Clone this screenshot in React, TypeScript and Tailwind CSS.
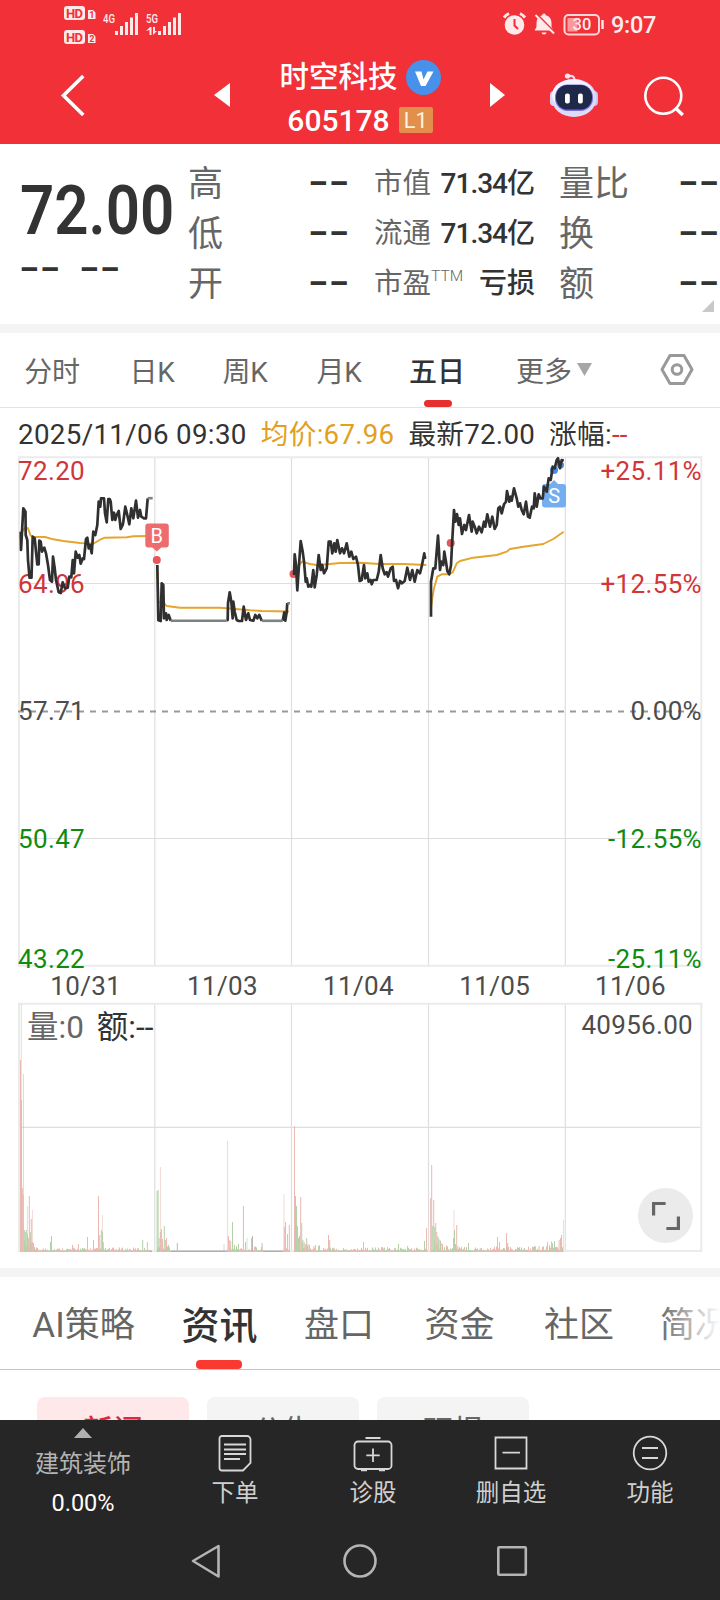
import type { ReactNode } from 'react';

type Bar = [x: number, height: number, tone: 'up' | 'down' | 'flat'];

const priceLines = [
    '20.7,531.7 21,550 22,532 23.3,508.3 25.5,511.7 25.7,535 27.3,540 28,560 29.5,577.7 31.5,577.7 32.7,536.7 34.7,538.3 36,551.7 37.3,564.3 38.7,564.3 39.3,540.7 40.7,541.7 42,551.7 44.3,547.7 46,553.3 48,565 50,580 52,581.7 53,556.7 54.7,568.3 56,580 58.7,592.3 60.7,593 62.7,582.3 65,588.3 67.7,587.7 69.3,576.7 71.3,577.3 72.7,560 74,573.3 75.7,551.7 77.7,557.7 79.3,555 80.7,563.7 82.7,558.3 84,559 86,539 87.3,537.7 88.7,548.3 90,545 91.7,553.3 93.3,531.7 95.3,535 97.3,525 98.7,501.7 100.3,506.7 101,498.3 104,498.3 105,513.3 106.7,522.3 108.3,499 109.7,499 110.7,501.7 112.3,520 114,512.7 115.3,520 116.7,515 118.7,511 120.7,529 122.7,525 123.3,521.7 125.3,506.7 127.3,515 129.3,524.3 131.3,508.3 133.3,518.3 136,500.7 138,517.7 140,510 141.3,516.7 144,518.3 146,518.3 147.7,498.3',
    '157.3,565 158.3,620.3 160.7,621 161.7,583.3 163.3,585 164,618.3 166,613.3 166.7,620 168.7,615 170.7,620.7',
    '226.7,620.7 227.7,620 228,603.3 229.7,592.3 231.3,601.7 232,610 232.7,618.3 233.3,601.7 234.7,611.7 236.7,620 238.7,621 242,621 243.7,606.7 246,620 248.3,613.3 250,620 253.3,620.7 255.3,615 257.3,618.3 259.3,615 261.7,620.7',
    '282.7,620.7 284.3,612.3 285.3,620.7 286.7,611.7 287.3,603',
    '294,575 294.7,554.3 296,565 297.3,590.3 299,565 300.7,541 302.7,551.7 304,561.7 305.7,581.7 306.7,578.3 308.3,586.7 310,585 311.3,586.7 313.3,570 314.7,587.3 316.7,575 318.7,555 320.7,570 322.3,565 324,573.3 326.7,568.3 328.7,541.7 330.7,541.7 332.3,553.3 334.3,543.3 335.7,551.7 337.3,540 340,553.3 342,548.3 344,553.3 346.7,543.3 349.3,556.7 351.3,551.7 353.3,559 356,556.7 358,565 359.7,581 361.7,580 364,565 365.3,578.3 367.3,573.3 368.7,581.7 370.7,580 371.7,584.3 373.3,580 376.7,580 378.7,571.7 380.7,555 382.7,568.3 384.7,574.3 386.7,572.3 388,576.7 390.7,568.3 392.7,566.7 394,581 396,580 398,588.3 400,581 402,583.3 404.7,581 407.3,567.7 410,580 412.3,570 414.7,581.7 417.3,570 420,573.3 422,565 424.3,553.3 424.7,557.7 426.3,557.7',
    '431,616.7 431,581.7 433.3,568.3 435.3,568.3 438,535.7 439,551.7 440,570 441.3,561.7 443.3,565 444.3,551.7 446,561.7 447.3,571 449.3,574.3 451,565 452,545 454,510 455.3,521.7 457,514 458.7,525 460,518.3 462,534 464.3,525 466,530 469,515 471.7,531.7 472.7,521.7 474.7,526.7 476.7,533.3 479,526.7 481.7,532.3 484,521.7 485.3,526.7 487.3,514.3 490,526.7 492.3,516.7 494.7,529 496.7,525 498.3,508.3 500,506.7 501.7,513.3 504,504.3 506,501.7 507,491 509.3,501.7 510.7,496.7 511.7,500.7 514,488.3 516.7,498.3 518.3,506.7 520,503.3 521.7,510 523.7,514.3 526,501.7 528,516.7 529.7,517.7 532,506.7 533.7,508.3 534.7,493.3 536.7,506.7 538.7,494.3 540.3,498.3 542.7,498.3 544,486.7 546.7,491.7 548.7,478.3 550.7,480 552.7,466.7 554.7,468.3 556.7,460 558,458.3 560,468.3 561.7,460 563.7,460.7',
];

const flatLines = ['147.7,498.2 152.7,498.2', '170.7,620.8 226.7,620.8', '261.7,620.8 282.7,620.8', '287.3,603.3 290,603.3'];

const avgLines = [
    '20.7,531.7 22,531.7 25.3,527.7 28,528.3 30.7,535.7 33.3,536.7 45,537 53.3,539.3 63.3,541 80,543 93.3,543.7 100,539.7 105,537.7 126.7,537.3 133.3,536.3 151.7,536',
    '157.3,565 158.7,601.7 160.7,603.3 163.3,602 166.7,606 180,607.7 220,607.7 226.7,608.3 238.3,609.3 250,610.3 262,611 289,611.5',
    '293.3,565 298.3,566.7 301.7,561.7 310,564 316.7,565 330,564 340,563 360,562.7 380,564 403.3,564 426.3,565',
    '431,608.3 432.3,598.3 434,588.3 437.3,576.7 441.7,574.3 448.3,574.3 452.7,572.3 456.7,563.3 460,561 473.3,557.7 496.7,555 506.7,551.7 510,549 523.3,546.7 543.3,544 553.3,539 563.7,531.7',
];

const spikes: Bar[] = [
    [20.4, 192, 'up'], [21.4, 152, 'up'], [22.3, 64, 'up'], [23.2, 57, 'up'], [24.2, 22, 'down'], [25.2, 20, 'down'], [26.2, 22, 'down'], [27.2, 18, 'down'], [28.2, 14, 'up'], [29.2, 56, 'up'], [30.2, 20, 'down'], [31.2, 33, 'up'], [32.4, 10, 'up'], [33.4, 9, 'up'], [34.4, 5, 'down'],
    [50.4, 10, 'down'], [51.4, 16, 'down'], [72.4, 7, 'up'], [78.4, 8, 'up'], [87.4, 15, 'up'], [93.4, 12, 'up'], [98.4, 56, 'up'], [99.6, 17, 'up'], [101.2, 22, 'down'], [102.4, 20, 'down'], [103.2, 10, 'up'], [142.6, 12, 'down'], [147.2, 10, 'up'],
    [157, 61, 'down'], [158, 62, 'down'], [159, 14, 'down'], [160.3, 20, 'up'], [161.3, 23, 'up'], [162.3, 13, 'up'], [164.2, 26, 'down'], [165.2, 12, 'down'], [166.4, 14, 'up'], [168.4, 7, 'down'], [177.2, 9, 'flat'],
    [228.4, 16, 'up'], [229.6, 12, 'up'], [230.6, 11, 'up'], [232.4, 30, 'down'], [234.4, 7, 'down'], [236.4, 6, 'down'], [238.4, 8, 'down'], [243.3, 46, 'up'], [245.4, 10, 'down'], [251.6, 14, 'flat'], [252.4, 16, 'flat'], [262, 9, 'down'],
    [284.2, 25, 'up'], [285.4, 30, 'up'], [287.4, 18, 'up'], [289.2, 27, 'up'],
    [294.4, 126, 'up'], [295.4, 56, 'down'], [296.4, 46, 'down'], [297.4, 26, 'up'], [298.4, 14, 'down'], [299.4, 16, 'down'], [300.6, 55, 'up'], [301.6, 29, 'down'], [302.8, 12, 'down'], [304, 10, 'up'], [305.2, 8, 'up'], [306.6, 14, 'down'], [308, 8, 'up'], [309.4, 7, 'down'], [313.8, 6, 'up'],
    [328.4, 17, 'up'], [329.6, 12, 'down'], [363.4, 10, 'up'], [398.4, 8, 'down'], [407.4, 6, 'up'], [424.4, 11, 'down'], [426.4, 24, 'up'],
    [430.6, 54, 'up'], [431.6, 87, 'up'], [432.6, 26, 'down'], [433.6, 52, 'up'], [434.6, 25, 'down'], [435.6, 29, 'up'], [436.6, 20, 'up'], [437.6, 16, 'up'], [438.6, 14, 'down'], [439.8, 12, 'up'], [441, 9, 'down'], [442.4, 7, 'up'], [444.4, 5, 'down'],
    [453.4, 14, 'up'], [454.4, 22, 'down'], [455.4, 8, 'down'], [456.6, 27, 'up'], [457.8, 6, 'up'], [468.4, 9, 'down'], [497.4, 15, 'up'], [499.4, 10, 'up'], [506.4, 19, 'up'], [507.6, 9, 'down'], [534.4, 6, 'down'], [539, 6, 'up'], [547.4, 10, 'up'], [554.4, 11, 'down'], [559, 12, 'up'], [560.4, 14, 'up'], [561.4, 17, 'up'],
];

const faintSpikes: Bar[] = [
    [21.3, 248, 'down'], [23.4, 178, 'flat'], [27.4, 46, 'down'], [32.4, 42, 'up'], [102.4, 37, 'up'],
    [160.4, 85, 'up'], [224, 8, 'flat'], [227.4, 111, 'up'], [284, 58, 'up'], [454, 42, 'up'], [563.4, 32, 'up'], [247, 14, 'down'],
];

const toneFill = { up: '#e9b9b2', down: '#b4d1a8', flat: '#b9b9b9' };

// low volume between the spikes: [from, to, base height]
const quiet = [
    [24, 34, 14],
    [34, 150, 3],
    [157, 171, 7],
    [227, 263, 4],
    [283, 290, 7],
    [295, 310, 10],
    [310, 325, 6],
    [325, 428, 3.5],
    [431, 441, 16],
    [441, 450, 7],
    [450, 545, 4],
    [545, 563, 9],
];

const quietBars: Bar[] = quiet.flatMap(([from, to, base]) => {
    const out: Bar[] = [];
    for (let x = from; x < to; x += 1) {
        const n = Math.abs(Math.sin(x * 12.9898) * 43758.5453) % 1;
        out.push([x, 1.6 + n * n * base, n * 7 % 1 > 0.42 ? 'up' : 'down']);
    }
    return out;
});

const gridX = [154.8, 291.5, 428.5, 565.3];

function Dashes() {
    return (
        <span className="flex h-[28px] w-[42px] items-center">
            <span className="origin-left -translate-x-px -translate-y-[1.5px] scale-x-[1.85] whitespace-pre font-['DejaVu_Sans'] text-[27px] font-bold leading-none text-[#333]">--</span>
        </span>
    );
}

function StatusBar() {
    return (
        <div className="flex h-[46px] items-center pl-[63px] text-white">
            <svg width="122" height="46" viewBox="63 0 122 46" fill="#ffe9ea">
                <rect x="64" y="6" width="21" height="14" rx="3" />
                <rect x="64" y="30" width="21" height="14" rx="3" />
                <g fill="#f13038" fontFamily="Roboto" fontWeight="700">
                    <text x="66" y="17.8" fontSize="13" textLength="17">HD</text>
                    <text x="66" y="41.8" fontSize="13" textLength="17">HD</text>
                </g>
                <path d="M88 10h5l2.500 2.500V19H88zM88 34h5l2.500 2.500V43H88z" />
                <g fill="#f13038" fontFamily="Roboto" fontWeight="700" fontSize="9">
                    <text x="89.300" y="18">1</text>
                    <text x="89.300" y="42">2</text>
                </g>
                <g fontFamily="Roboto" fontWeight="500" fontSize="13">
                    <text x="103" y="23" textLength="12" lengthAdjust="spacingAndGlyphs">4G</text>
                    <text x="146" y="23" textLength="12" lengthAdjust="spacingAndGlyphs">5G</text>
                </g>
                <path d="M115 31h3v4h-3zM120 26h3v9h-3zM125 22h3v13h-3zM130 17.500h3V35h-3zM135 13h3v22h-3z" />
                <path d="M158 31h3v4h-3zM163 26h3v9h-3zM168 22h3v13h-3zM173 17.500h3V35h-3zM178 13h3v22h-3z" />
                <path d="M146 31l4-4h1.500v8h-2v-5zM153 27h2v4h2l-4 4z" />
            </svg>
            <svg className="ml-[318px]" width="101" height="46" viewBox="503 0 101 46" fill="#ffe9ea">
                <circle cx="514.500" cy="25" r="9.800" />
                <path d="M504 17.500a14 14 0 0 1 5-4M525 17.500a14 14 0 0 0-5-4" fill="none" stroke="#ffe9ea" strokeWidth="3" />
                <path d="M514.500 19v6.500l3.500 3.500" fill="none" stroke="#f13038" strokeWidth="2" />
                <path d="M544 13.500a1.800 1.800 0 0 1 1.800 1.800c3.800 1 5.700 3.700 5.700 7.700v4l2 3.500H534.500l2-3.500v-4c0-4 2-6.700 5.700-7.700a1.800 1.800 0 0 1 1.800-1.800zM541.500 32.500h5a2.500 2 0 0 1-5 0z" />
                <path d="M537 14.500l18 18.500" stroke="#f13038" strokeWidth="2.400" />
                <path d="M535.500 15l18.500 18.500" stroke="#ffe9ea" strokeWidth="2" />
                <rect x="564.500" y="15" width="34.500" height="19.500" rx="4" fill="none" stroke="#ffd7d9" strokeWidth="2" />
                <rect x="567.500" y="18" width="10" height="13.500" fill="#fb9a9d" />
                <text x="572.500" y="30.300" fontFamily="Roboto" fontWeight="500" fontSize="16.500" textLength="19">30</text>
                <path d="M602.500 20v9" stroke="#ffe9ea" strokeWidth="2.500" />
            </svg>
            <span className="mt-[6px] ml-[7px] text-[23.500px] leading-none font-medium tracking-[-0.3px] text-[#ffeeee]">9:07</span>
        </div>
    );
}

function Header() {
    return (
        <div className="flex h-[98px] items-center">
            <svg className="ml-[58px] shrink-0" width="30" height="50" viewBox="58 69 30 50" fill="none" stroke="#fff" strokeWidth="3.6">
                <path d="M83.300 75L63.500 94.500L83.300 114" />
            </svg>
            <svg className="ml-[126px] shrink-0" width="16" height="24" viewBox="0 0 16 24" fill="#fff">
                <path d="M16 0v24L0 12z" />
            </svg>
            <div className="flex w-[260px] flex-col items-center pt-[6px]">
                <div className="flex h-[43px] items-center gap-[8px]">
                    <span className="mt-[2px] text-[29.500px] leading-none font-medium text-white">时空科技</span>
                    <svg width="35" height="35" viewBox="0 0 35 35">
                        <circle cx="17.500" cy="17.500" r="17.500" fill="#4791ea" />
                        <path d="M9 11.500h6.500l2 8 4-8h6l-8 14.500h-4.500z" fill="#fff" />
                    </svg>
                </div>
                <div className="flex h-[42px] items-center gap-[9px]">
                    <span className="mt-[2px] text-[30px] leading-none font-medium text-white">605178</span>
                    <span className="flex h-[26px] w-[34px] items-center justify-center rounded-[2px] bg-[#e28f4b] pt-[2px] text-[21.500px] leading-none text-[#fff3e4]">L1</span>
                </div>
            </div>
            <svg className="shrink-0" width="15" height="24" viewBox="0 0 15 24" fill="#fff">
                <path d="M0 0v24l15-12z" />
            </svg>
            <svg className="ml-[44px] shrink-0" width="50" height="50" viewBox="549 69 50 50">
                <path d="M574.500 79c0-3.500-2-4.500-6-4" fill="none" stroke="#e3dcfa" strokeWidth="2.200" />
                <circle cx="567.500" cy="75" r="2.600" fill="#fbe5f0" />
                <rect x="550" y="90" width="8" height="15" rx="4" fill="#d9d5fb" />
                <rect x="590" y="90" width="8" height="15" rx="4" fill="#c5c3f6" />
                <ellipse cx="574" cy="97" rx="22.500" ry="19" fill="#dcdbfa" />
                <ellipse cx="572.500" cy="94" rx="20.500" ry="15.800" fill="#f4f3ff" />
                <rect x="555" y="83.500" width="38" height="26.500" rx="12.500" fill="#7b6fe0" />
                <rect x="556" y="84" width="36" height="24.500" rx="11.500" fill="#1e2848" />
                <rect x="565" y="92.500" width="4.800" height="10" rx="2" fill="#fff" />
                <rect x="578" y="92.500" width="4.800" height="10" rx="2" fill="#fff" />
            </svg>
            <svg className="ml-[42px] shrink-0" width="44" height="44" viewBox="641 72 44 44" fill="none" stroke="#fff" strokeWidth="2.600">
                <circle cx="663.300" cy="94.800" r="18" />
                <path d="M675.500 107l7.300 7" strokeWidth="3.400" />
            </svg>
        </div>
    );
}

function MidRow({ label, sup, children }: { label: string; sup?: string; children: ReactNode }) {
    return (
        <div className="flex h-[50px] items-center justify-between pt-[4px] leading-none">
            <span className="flex items-center text-[28.500px] text-[#666]">
                {label}
                {sup && <span className="-mt-[14px] text-[15.500px] font-light">{sup}</span>}
            </span>
            <span className="text-[28px] font-medium text-[#333]">{children}</span>
        </div>
    );
}

function SideRow({ label }: { label: string }) {
    return (
        <div className="flex h-[50px] items-center justify-between text-[35px] leading-none text-[#666]">
            <span className="pt-[4px]">{label}</span>
            <Dashes />
        </div>
    );
}

function Quote() {
    return (
        <div className="relative flex h-[180px] overflow-hidden pt-[13px]">
            <div className="w-[188px] shrink-0 pl-[20px]">
                <div className="mt-[19px] w-fit origin-left scale-x-[0.87] text-[69px] leading-[70px] font-semibold text-[#333]">72.00</div>
                <div className="mt-[8px] flex gap-[18px]">
                    <Dashes />
                    <Dashes />
                </div>
            </div>
            <div className="flex w-[163px] shrink-0 flex-col">
                <SideRow label="高" />
                <SideRow label="低" />
                <SideRow label="开" />
            </div>
            <div className="ml-[23px] w-[161px] shrink-0">
                <MidRow label="市值"><span className="tracking-[-1px]">71.34</span>亿</MidRow>
                <MidRow label="流通"><span className="tracking-[-1px]">71.34</span>亿</MidRow>
                <MidRow label="市盈" sup="TTM">亏损</MidRow>
            </div>
            <div className="ml-[24px] flex w-[162px] shrink-0 flex-col">
                <SideRow label="量比" />
                <SideRow label="换" />
                <SideRow label="额" />
            </div>
            <svg className="absolute right-[6px] bottom-[12px]" width="12" height="12" viewBox="0 0 12 12" fill="#c8c8c8">
                <path d="M12 0v12H0z" />
            </svg>
        </div>
    );
}

function PeriodTabs() {
    return (
        <div className="grid h-[75px] grid-cols-[104px_96px_90px_98px_98px_148px_86px] border-b border-[#e2e2e2] text-[28px] leading-none text-[#666]">
            {['分时', '日K', '周K', '月K'].map((tab) => (
                <span key={tab} className="flex items-center justify-center pt-[5px] tracking-[-0.3px]">{tab}</span>
            ))}
            <span className="relative flex items-center justify-center pt-[5px] font-medium text-[#333]">
                五日
                <span className="absolute bottom-0 left-[36px] h-[7px] w-[28px] rounded-full bg-[#e62f2f]" />
            </span>
            <span className="flex items-center gap-[5px] pt-[5px] pl-[30px]">
                更多
                <svg className="-mt-[7px]" width="15" height="13" viewBox="0 0 15 13" fill="#a6a6a6">
                    <path d="M0 0h15L7.500 13z" />
                </svg>
            </span>
            <span className="flex items-center justify-center">
                <svg width="34" height="34" viewBox="0 0 34 34" fill="none" stroke="#999" strokeWidth="3" strokeLinejoin="round">
                    <path d="M10 2.500h14l8 14-8 14H10l-8-14z" />
                    <circle cx="17" cy="16.500" r="4.800" />
                </svg>
            </span>
        </div>
    );
}

function PriceChart() {
    return (
        <svg className="block" width="720" height="546" viewBox="0 456 720 546" fontFamily="Roboto" fontSize="26" letterSpacing="0.35">
            <g stroke="#dedede" strokeWidth="1.200" fill="none">
                <path d="M19 583.500H702M19 838.500H702" />
                {gridX.map((x) => <path key={x} d={`M${x} 457V966`} />)}
                <path d="M19 457.200H701.300V965.800H19z" stroke="#ebebeb" strokeWidth="2" />
            </g>
            <path d="M18 711.500H701" stroke="#999" strokeWidth="2" strokeDasharray="6 6" />
            <g fill="none" stroke="#e5a52c" strokeWidth="1.900" strokeLinejoin="round">
                {avgLines.map((points) => <polyline key={points} points={points} />)}
            </g>
            <path d="M156.800 551.500l-4.500-4h-4a3 3 0 0 1-3-3v-18a3 3 0 0 1 3-3h17.500a3 3 0 0 1 3 3v18a3 3 0 0 1-3 3h-4.500z" fill="#ed6d6e" />
            <text x="157" y="542.500" fontSize="20" fill="#fff" textAnchor="middle">B</text>
            <g fill="#e8565a">
                <circle cx="156.800" cy="560" r="4" />
                <circle cx="293.500" cy="574" r="4" />
                <circle cx="450.700" cy="543" r="4" />
            </g>
            <path d="M554 480l4 4h5a3 3 0 0 1 3 3v17.500a3 3 0 0 1-3 3h-18a3 3 0 0 1-3-3V487a3 3 0 0 1 3-3h5z" fill="#74aef0" />
            <text x="554.300" y="503" fontSize="20" fill="#fff" textAnchor="middle">S</text>
            <circle cx="554" cy="470" r="4" fill="#4a90e2" />
            <circle cx="560.500" cy="465" r="3.500" fill="#4a90e2" />
            <g fill="#d03638">
                <text x="18" y="480">72.20</text>
                <text x="18" y="593">64.96</text>
                <text x="702" y="480" textAnchor="end">+25.11%</text>
                <text x="702" y="593" textAnchor="end">+12.55%</text>
            </g>
            <g fill="none" strokeLinejoin="round">
                {priceLines.map((points) => <polyline key={points} points={points} stroke="#303030" strokeWidth="2.700" />)}
                {flatLines.map((points) => <polyline key={points} points={points} stroke="#7c8284" strokeWidth="2.600" />)}
            </g>
            <g fill="#4c4c4c">
                <text x="18" y="720">57.71</text>
                <text x="702" y="720" textAnchor="end">0.00%</text>
            </g>
            <g fill="#0f8c0f">
                <text x="18" y="848">50.47</text>
                <text x="18" y="968">43.22</text>
                <text x="702" y="848" textAnchor="end">-12.55%</text>
                <text x="702" y="968" textAnchor="end">-25.11%</text>
            </g>
            <g fill="#4c4c4c" textAnchor="middle">
                <text x="85.800" y="995">10/31</text>
                <text x="222.500" y="995">11/03</text>
                <text x="358.500" y="995">11/04</text>
                <text x="494.700" y="995">11/05</text>
                <text x="630.500" y="995">11/06</text>
            </g>
        </svg>
    );
}

function VolumeChart() {
    return (
        <div className="relative">
            <svg className="block" width="720" height="266" viewBox="0 1002 720 266">
                <g stroke="#dedede" strokeWidth="1.200" fill="none">
                    <path d="M19 1127.400H702" />
                    {gridX.map((x) => <path key={x} d={`M${x} 1003V1251`} />)}
                    <path d="M19 1003.800H701.300V1251H19z" stroke="#ebebeb" strokeWidth="2" />
                </g>
                <path d="M171 1251.200H227M263 1251.200H283M145 1251.200H152" stroke="#b0b0b0" strokeWidth="1.600" />
                {faintSpikes.map(([x, h, tone]) => (
                    <rect key={x} x={x - 0.5} y={1252 - h} width="1" height={h} fill={toneFill[tone]} opacity="0.55" />
                ))}
                {quietBars.map(([x, h, tone]) => (
                    <rect key={x} x={x} y={1252 - h} width="1" height={h} fill={toneFill[tone]} />
                ))}
                {spikes.map(([x, h, tone]) => (
                    <rect key={x} x={x - 0.4} y={1252 - h} width="1" height={h} fill={toneFill[tone]} />
                ))}
            </svg>
            <div className="absolute top-[8px] left-[27px] flex gap-[13px] text-[31.500px] leading-[36px] text-[#666]">
                <span>量:0</span>
                <span className="text-[#333]">额:--</span>
            </div>
            <span className="absolute top-[7px] right-[27px] text-[26px] leading-[32px] tracking-[0.3px] text-[#4c4c4c]">40956.00</span>
            <button className="absolute top-[186px] left-[638px] flex size-[55px] items-center justify-center rounded-full bg-[#ebebeb]">
                <svg width="28" height="28" viewBox="0 0 28 28" fill="none" stroke="#666" strokeWidth="3.200">
                    <path d="M1.600 13.500v-12h12M26.400 14.500v12h-12" />
                </svg>
            </button>
        </div>
    );
}

function InfoTabs() {
    return (
        <div className="relative overflow-hidden">
            <div className="grid h-[93px] grid-cols-[137px_135px_104px_137px_102px_130px] border-b border-[#c4c4c4] pl-[15px] text-[35px] leading-none text-[#666]">
                <span className="flex items-center justify-center pt-[5px]">AI策略</span>
                <span className="relative flex items-center justify-center pt-[5px] text-[38px] font-medium text-[#333]">
                    资讯
                    <span className="absolute bottom-0 left-[44px] h-[9px] w-[46px] rounded-[4px] bg-[#fa3a30]" />
                </span>
                {['盘口', '资金', '社区', '简况'].map((tab) => (
                    <span key={tab} className="flex items-center justify-center pt-[5px] whitespace-nowrap">{tab}</span>
                ))}
            </div>
            <div className="absolute top-0 right-0 h-[90px] w-[62px] bg-linear-to-r from-white/0 to-white" />
        </div>
    );
}

function BottomItem({ label, children }: { label: string; children: ReactNode }) {
    return (
        <div className="flex flex-col items-center pt-[14px]">
            <svg width="40" height="40" viewBox="0 0 40 40" fill="none" stroke="#d8d8d8" strokeWidth="1.800">
                {children}
            </svg>
            <span className="mt-[7px] text-[23.500px] leading-[24px] text-[#d0d0d0]">{label}</span>
        </div>
    );
}

export default function App() {
    return (
        <div className="flex h-[1600px] w-[720px] flex-col overflow-hidden bg-white font-['Roboto','Noto_Sans_CJK_SC',sans-serif]">
            <header className="h-[144px] bg-[#f13038]">
                <StatusBar />
                <Header />
            </header>
            <Quote />
            <div className="h-[9px] bg-[#f4f4f4]" />
            <PeriodTabs />
            <div className="flex h-[48px] items-center gap-[14px] pt-[5px] pl-[18px] text-[27.700px] leading-none tracking-[0.25px] whitespace-nowrap text-[#333]">
                <span className="tracking-[0.35px]">2025/11/06 09:30</span>
                <span className="text-[#e2a01c]">均价:67.96</span>
                <span>最新72.00</span>
                <span>涨幅:<span className="text-[#d03638]">--</span></span>
            </div>
            <PriceChart />
            <VolumeChart />
            <div className="h-[9px] shrink-0 bg-[#f4f4f4]" />
            <InfoTabs />
            <div className="flex h-[50px] gap-[18px] overflow-hidden pt-[27px] pl-[37px] text-[30px] leading-[67px]">
                <span className="h-[64px] w-[152px] shrink-0 rounded-[8px] bg-[#ffe8ea] text-center font-medium text-[#e0283c]">新闻</span>
                <span className="h-[64px] w-[152px] shrink-0 rounded-[8px] bg-[#f4f4f4] text-center text-[#666]">公告</span>
                <span className="h-[64px] w-[152px] shrink-0 rounded-[8px] bg-[#f4f4f4] text-center text-[#666]">研报</span>
            </div>
            <footer className="h-[180px] shrink-0 bg-[#262626]">
                <div className="grid h-[104px] grid-cols-[166px_138px_138px_138px_140px]">
                    <div className="flex flex-col items-center pt-[8px] leading-none">
                        <svg width="18" height="10" viewBox="0 0 18 10" fill="#b0b0b0">
                            <path d="M9 0l9 10H0z" />
                        </svg>
                        <span className="mt-[14px] text-[24px] text-[#b4b4b4]">建筑装饰</span>
                        <span className="mt-[16px] text-[23.500px] text-white">0.00%</span>
                    </div>
                    <BottomItem label="下单">
                        <path d="M7 2h25a3.500 3.500 0 0 1 3.500 3.500V29L28 36.500H7A2.500 2.500 0 0 1 4.500 34V4.500A2.500 2.500 0 0 1 7 2zM9 10.500h22M9 15.500h22M9 20h22M9 25h16" />
                    </BottomItem>
                    <BottomItem label="诊股">
                        <path d="M5 7.500h30a3.500 3.500 0 0 1 3.500 3.500v20.500A3.500 3.500 0 0 1 35 35H5a3.500 3.500 0 0 1-3.500-3.500V11A3.500 3.500 0 0 1 5 7.500zM12.500 4h15M20 14.500V28M13.300 21.300h13.400M8 36.300h6M26 36.300h6" />
                    </BottomItem>
                    <BottomItem label="删自选">
                        <path d="M4.500 3.500h31v31h-31zM11.500 18.700h17.500" />
                    </BottomItem>
                    <BottomItem label="功能">
                        <circle cx="20" cy="19" r="16.300" />
                        <path d="M12 14h16M12 24h16" />
                    </BottomItem>
                </div>
                <svg className="block" width="720" height="76" viewBox="0 1524 720 76" fill="none" stroke="#b4b4b4" strokeWidth="2.600" strokeLinejoin="round">
                    <path d="M218.500 1546v30.500L193 1561z" />
                    <circle cx="360" cy="1561" r="15.500" />
                    <rect x="498.300" y="1547.300" width="27.500" height="27.500" rx="1" />
                </svg>
            </footer>
        </div>
    );
}
